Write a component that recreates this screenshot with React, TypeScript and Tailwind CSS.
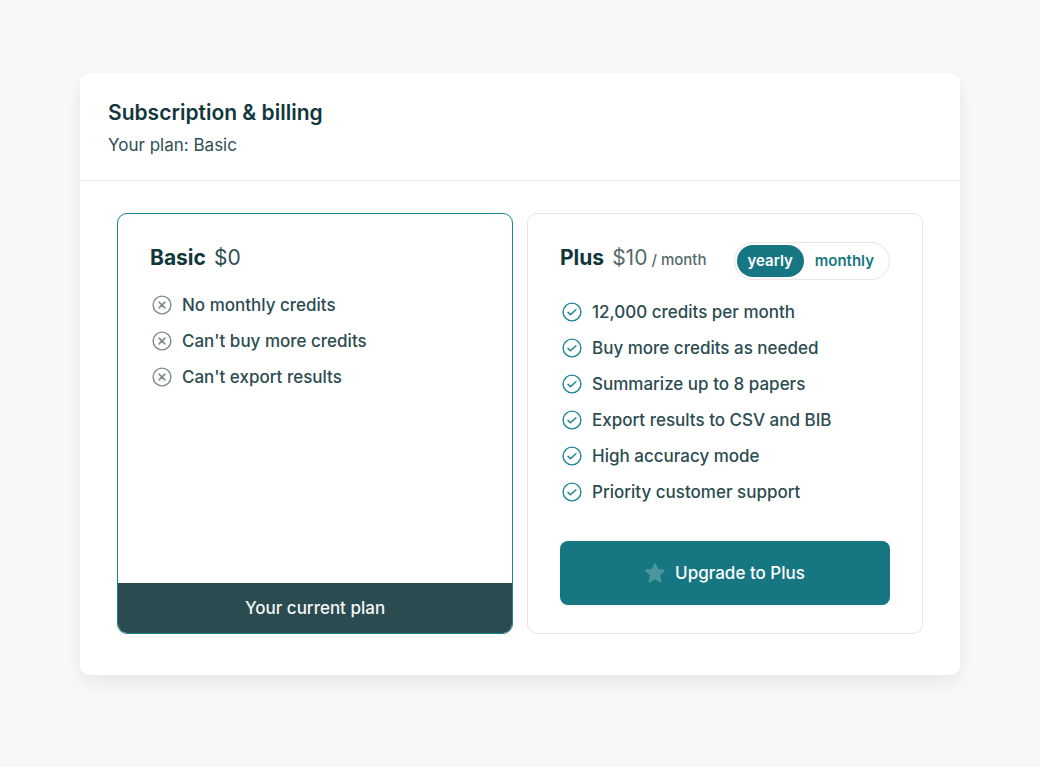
import React, { useState } from "react";

type Period = "yearly" | "monthly";

const periods: Period[] = ["yearly", "monthly"];

const basicFeatures = [
  "No monthly credits",
  "Can't buy more credits",
  "Can't export results",
];

const plusFeatures = [
  "12,000 credits per month",
  "Buy more credits as needed",
  "Summarize up to 8 papers",
  "Export results to CSV and BIB",
  "High accuracy mode",
  "Priority customer support",
];

const CrossIcon = () => (
  <svg
    viewBox="0 0 20 20"
    className="size-5 shrink-0 text-[#7d8a89]"
    fill="none"
    stroke="currentColor"
    strokeLinecap="round"
    aria-hidden="true"
  >
    <circle cx="10" cy="10" r="8.9" strokeWidth="1.4" />
    <path d="M7.1 7.1l5.8 5.8M12.9 7.1l-5.8 5.8" strokeWidth="1.5" />
  </svg>
);

const CheckIcon = () => (
  <svg
    viewBox="0 0 20 20"
    className="size-5 shrink-0 text-[#1d8791]"
    fill="none"
    stroke="currentColor"
    strokeLinecap="round"
    strokeLinejoin="round"
    aria-hidden="true"
  >
    <circle cx="10" cy="10" r="8.9" strokeWidth="1.4" />
    <path d="M6 10.4l2.5 2.3 5.4-4.9" strokeWidth="1.5" />
  </svg>
);

const StarIcon = () => (
  <svg
    viewBox="0 0 20 20"
    className="size-5 shrink-0 text-[#4a979e]"
    fill="currentColor"
    stroke="currentColor"
    strokeWidth="2"
    strokeLinejoin="round"
    aria-hidden="true"
  >
    <path d="M10 1.3l2.5 5.5 6.2.7-4.6 4.2 1.4 6.8-5.5-3.3-5.5 3.3 1.4-6.8L1.3 7.500l6.200-.700z" />
  </svg>
);

interface FeatureListProps {
  features: string[];
  icon: React.ReactNode;
}

const FeatureList: React.FC<FeatureListProps> = ({ features, icon }) => (
  <ul className="text-[17px] leading-9 font-medium text-[#2b4c50]">
    {features.map((feature) => (
      <li key={feature} className="flex items-center gap-2.5 pl-0.5">
        {icon}
        {feature}
      </li>
    ))}
  </ul>
);

const PeriodToggle: React.FC = () => {
  const [period, setPeriod] = useState<Period>("yearly");

  return (
    <div
      role="group"
      aria-label="Billing period"
      className="flex rounded-full border border-[#e6e6e6] p-0.5 pr-1"
    >
      {periods.map((value) => (
        <button
          key={value}
          type="button"
          aria-pressed={period === value}
          onClick={() => setPeriod(value)}
          className={`h-8 rounded-full px-[11px] text-[15px] font-semibold ${
            period === value ? "bg-[#167782] text-white" : "text-[#167782]"
          }`}
        >
          {value}
        </button>
      ))}
    </div>
  );
};

const App: React.FC = () => {
  return (
    <main className="min-h-screen bg-[#f8f8f7] px-4 py-[73px] font-['Inter','Noto_Sans',sans-serif] md:px-20">
      <section className="rounded-[10px] bg-white shadow-[0_8px_16px_rgba(60,30,30,0.07)]">
        <header className="border-b border-[#ececec] px-7 pt-[26px] pb-[21px]">
          <h1 className="text-[21px] leading-7 font-semibold text-[#12373b]">
            Subscription & billing
          </h1>
          <p className="mt-1 text-[17px] leading-7 text-[#2f4f53]">
            Your plan: Basic
          </p>
        </header>

        <div className="grid grid-cols-1 gap-3.5 px-[37px] pt-8 pb-[41px] md:grid-cols-2">
          {/* Basic */}
          <article className="flex flex-col overflow-hidden rounded-[10px] border border-[#1d8791]">
            <div className="grow px-8 pt-7 pb-7">
              <div className="mb-[13px] flex h-8 items-baseline gap-2 text-[21px] leading-8">
                <h2 className="font-bold text-[#12373b]">Basic</h2>
                <span className="text-[#2f4f53]">$0</span>
              </div>
              <FeatureList features={basicFeatures} icon={<CrossIcon />} />
            </div>
            <p className="bg-[#2a4c50] text-center text-[17px] leading-[50px] font-medium text-[#f4f6f6]">
              Your current plan
            </p>
          </article>

          {/* Plus */}
          <article className="rounded-[10px] border border-[#e6e6e6] px-8 py-7">
            <div className="mb-3.5 flex items-start justify-between">
              <div className="flex h-8 items-baseline text-[21px] leading-8 whitespace-nowrap">
                <h2 className="mr-2 font-bold text-[#12373b]">Plus</h2>
                <span className="mr-1 text-[#536b6d]">$10</span>
                <span className="text-[15px] font-medium text-[#536b6d]">
                  / month
                </span>
              </div>
              <PeriodToggle />
            </div>
            <FeatureList features={plusFeatures} icon={<CheckIcon />} />
            <button
              type="button"
              className="mt-[31px] flex h-16 w-full items-center justify-center gap-2.5 rounded-lg bg-[#167782] text-[17px] leading-9 font-medium text-white"
            >
              <StarIcon />
              Upgrade to Plus
            </button>
          </article>
        </div>
      </section>
    </main>
  );
};

export default App;
